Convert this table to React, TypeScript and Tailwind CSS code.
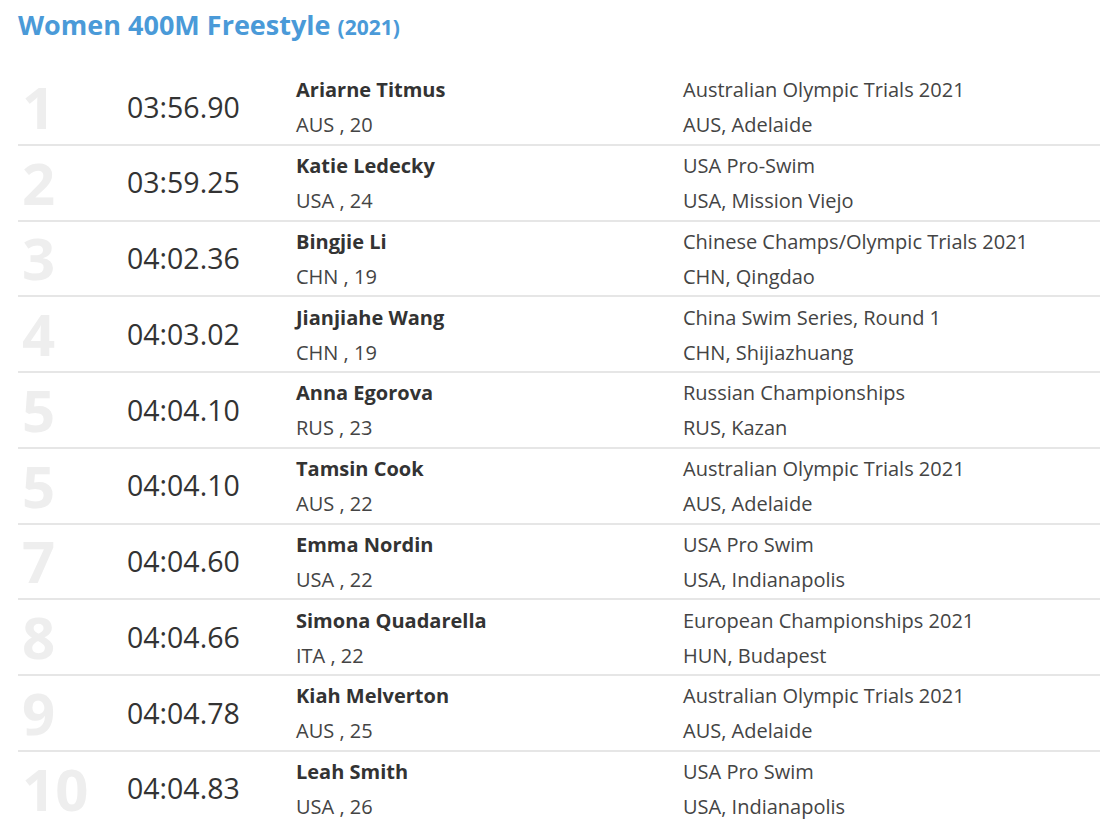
import React from 'react';

type Row = {
  rank: number;
  time: string;
  name: string;
  country: string;
  age: number;
  meet: string;
  place: string;
};

const rows: Row[] = [
  { rank: 1, time: '03:56.90', name: 'Ariarne Titmus', country: 'AUS', age: 20, meet: 'Australian Olympic Trials 2021', place: 'AUS, Adelaide' },
  { rank: 2, time: '03:59.25', name: 'Katie Ledecky', country: 'USA', age: 24, meet: 'USA Pro-Swim', place: 'USA, Mission Viejo' },
  { rank: 3, time: '04:02.36', name: 'Bingjie Li', country: 'CHN', age: 19, meet: 'Chinese Champs/Olympic Trials 2021', place: 'CHN, Qingdao' },
  { rank: 4, time: '04:03.02', name: 'Jianjiahe Wang', country: 'CHN', age: 19, meet: 'China Swim Series, Round 1', place: 'CHN, Shijiazhuang' },
  { rank: 5, time: '04:04.10', name: 'Anna Egorova', country: 'RUS', age: 23, meet: 'Russian Championships', place: 'RUS, Kazan' },
  { rank: 5, time: '04:04.10', name: 'Tamsin Cook', country: 'AUS', age: 22, meet: 'Australian Olympic Trials 2021', place: 'AUS, Adelaide' },
  { rank: 7, time: '04:04.60', name: 'Emma Nordin', country: 'USA', age: 22, meet: 'USA Pro Swim', place: 'USA, Indianapolis' },
  { rank: 8, time: '04:04.66', name: 'Simona Quadarella', country: 'ITA', age: 22, meet: 'European Championships 2021', place: 'HUN, Budapest' },
  { rank: 9, time: '04:04.78', name: 'Kiah Melverton', country: 'AUS', age: 25, meet: 'Australian Olympic Trials 2021', place: 'AUS, Adelaide' },
  { rank: 10, time: '04:04.83', name: 'Leah Smith', country: 'USA', age: 26, meet: 'USA Pro Swim', place: 'USA, Indianapolis' },
];

const RankingRow: React.FC<{ row: Row; last: boolean }> = ({ row, last }) => {
  return (
    <div
      className={`flex items-center h-[75.75px] border-b-2 ${last ? 'border-transparent' : 'border-[#e6e6e6]'}`}
    >
      <div className="w-[109px] pl-[4px] text-[58px] font-bold leading-none text-[#eeeeee]">{row.rank}</div>
      <div className="w-[169px] text-[28.5px] leading-none text-[#333333]">{row.time}</div>
      <div className="w-[387px] mt-[2px] flex flex-col gap-[13px] text-[20px] leading-[22px] text-[#333333]">
        <span className="font-bold">{row.name}</span>
        <span className="text-[#444444]">
          {row.country} , {row.age}
        </span>
      </div>
      <div className="mt-[2px] flex flex-col gap-[13px] text-[20px] leading-[22px] text-[#444444]">
        <span>{row.meet}</span>
        <span>{row.place}</span>
      </div>
    </div>
  );
};

const App: React.FC = () => {
  return (
    <div className="min-h-screen bg-white font-['Open_Sans',sans-serif] pl-[18px] overflow-hidden">
      <h1 className="pt-[6px] h-[70px] text-[27px] font-bold text-[#4a9ad8] leading-[38px]">
        Women 400M Freestyle <span className="text-[21px]">(2021)</span>
      </h1>
      <div className="w-[1082px]">
        {rows.map((row, i) => (
          <RankingRow key={i} row={row} last={i === rows.length - 1} />
        ))}
      </div>
    </div>
  );
};

export default App;
